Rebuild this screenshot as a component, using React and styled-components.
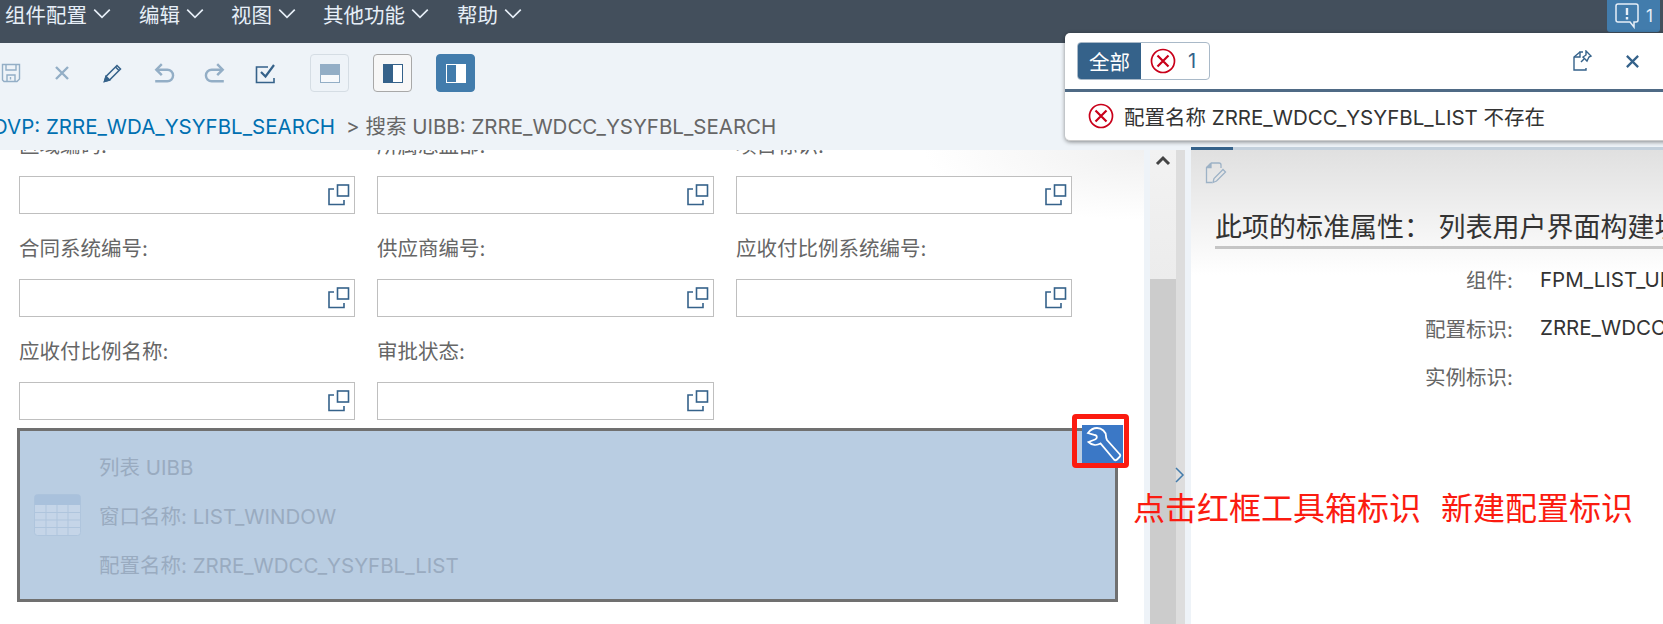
import React from 'react';
import styled, { createGlobalStyle } from 'styled-components';

const FONT = 'Inter, "Noto Sans CJK SC", sans-serif';
const DARK = '#35628a';
const MUTED = '#93aec6';

const GlobalStyle = createGlobalStyle`
  html, body {
    margin: 0;
    padding: 0;
    height: 624px;
    overflow: hidden;
    background: #fff;
    font-family: ${FONT};
  }
`;

const Page = styled.div`
  position: relative;
  width: 1663px;
  height: 624px;
  overflow: hidden;
  display: flex;
  flex-direction: column;
`;

const TopBar = styled.div`
  height: 43px;
  flex: none;
  background: #434f5c;
  display: flex;
  align-items: flex-start;
  padding-left: 5px;
`;

const MenuItem = styled.div`
  display: flex;
  align-items: center;
  height: 28px;
  gap: 5px;
  margin-right: ${props => props.$gap}px;
  color: #e6eef7;
  font-size: 20.5px;
`;

const NoticeButton = styled.div`
  margin-left: auto;
  margin-right: 3px;
  width: 53px;
  height: 32px;
  background: #427cac;
  border-radius: 0 0 3px 3px;
  display: flex;
  align-items: center;
  justify-content: center;
  gap: 6px;
  color: #e6eef7;
  font-size: 17px;
`;

const Toolbar = styled.div`
  position: relative;
  height: 107px;
  flex: none;
  background: #eef3f8;
  display: flex;
  flex-direction: column;
`;

const ToolRow = styled.div`
  height: 60px;
  margin-left: -15px;
  display: flex;
  align-items: center;
`;

const IconSlot = styled.div`
  width: 51px;
  height: 38px;
  display: flex;
  align-items: center;
  justify-content: center;
  color: ${props => (props.$off ? MUTED : DARK)};
`;

const ViewButton = styled.div`
  width: 39px;
  height: 38px;
  box-sizing: border-box;
  margin-left: ${props => props.$gap}px;
  border-radius: 4px;
  display: flex;
  align-items: center;
  justify-content: center;
  border: 1px solid ${props => (props.$kind === 'on' ? '#427cac' : props.$kind === 'off' ? '#d5dde4' : '#a8a8a8')};
  background: ${props => (props.$kind === 'on' ? '#427cac' : props.$kind === 'off' ? 'transparent' : '#f7f7f7')};
`;

const Crumbs = styled.div`
  margin-left: -8px;
  margin-top: 11px;
  font-size: 20.5px;
  line-height: 26px;
  color: #666;
  white-space: nowrap;
`;

const CrumbLink = styled.span`
  color: #0070b1;
  margin-right: 11px;
`;

const TabLine = styled.div`
  position: absolute;
  left: 1191px;
  right: 0;
  bottom: 0;
  height: 3px;
  background: linear-gradient(to right, ${DARK} 42px, #c3d0dc 42px);
`;

const Body = styled.div`
  flex: 1;
  display: flex;
  min-height: 0;
`;

const FormPane = styled.div`
  width: 1144px;
  flex: none;
  background: radial-gradient(ellipse 220px 70px at top right, #f0f0f0, #ffffff);
`;

const FieldGrid = styled.div`
  display: grid;
  grid-template-columns: 336px 337px 336px;
  column-gap: 22px;
  padding-left: 19px;
`;

const LabelBox = styled.div`
  height: ${props => (props.$cut ? 26 : 65)}px;
  overflow: hidden;
  display: flex;
  flex-direction: column;
  justify-content: flex-end;
`;

const Label = styled.div`
  height: 65px;
  flex: none;
  display: flex;
  align-items: center;
  font-size: 20.5px;
  color: #666;
`;

const InputBox = styled.div`
  height: 38px;
  box-sizing: border-box;
  border: 1px solid #bfbfbf;
  background: #fff;
  display: flex;
  align-items: center;
  justify-content: flex-end;
  padding-right: 4px;
`;

const ListBlock = styled.div`
  position: relative;
  box-sizing: border-box;
  width: 1101px;
  height: 174px;
  margin: 8px 0 0 17px;
  border: 3px solid #707070;
  background: #b9cde2;
  display: flex;
  align-items: center;
  padding-left: 14px;
  gap: 18px;
`;

const BlockLines = styled.div`
  display: flex;
  flex-direction: column;
  gap: 23px;
  margin-top: 4px;
  color: #99abc0;
  font-size: 20.5px;
  line-height: 26px;
`;

const ToolMark = styled.div`
  position: absolute;
  top: -17px;
  right: -14px;
  width: 57px;
  height: 54px;
  box-sizing: border-box;
  border: 5px solid #fb1b10;
  border-radius: 4px;
  display: flex;
  align-items: flex-end;
  justify-content: flex-end;
  padding-right: 1px;
`;

const ToolButton = styled.div`
  width: 41px;
  height: 38px;
  background: #3b78c6;
  line-height: 0;
`;

const Splitter = styled.div`
  position: relative;
  width: 47px;
  flex: none;
  display: flex;
  background: #eef3f8;
  padding: 0 6px;
  box-sizing: border-box;
`;

const ScrollColumn = styled.div`
  width: 26px;
  display: flex;
  flex-direction: column;
`;

const ScrollTrack = styled.div`
  height: 129px;
  background: linear-gradient(to bottom, #f2f2f2, #ececec);
  display: flex;
  justify-content: center;
  padding-top: 2px;
  box-sizing: border-box;
  color: #444;
`;

const ScrollThumb = styled.div`
  flex: 1;
  background: #cccccc;
`;

const Rail = styled.div`
  width: 9px;
  background: #dddddd;
`;

const CollapseArrow = styled.div`
  position: absolute;
  left: 26px;
  top: 316px;
  line-height: 0;
`;

const DetailPane = styled.div`
  flex: 1;
  min-width: 0;
  overflow: hidden;
  background: linear-gradient(to bottom, #e0e0e0 0, #ffffff 125px);
  padding: 12px 0 0 24px;
`;

const DocIconBox = styled.div`
  margin-left: -10px;
  height: 22px;
  line-height: 0;
`;

const DetailTitle = styled.div`
  margin-top: 26px;
  height: 36px;
  line-height: 36px;
  border-bottom: 3px solid #c5c5c5;
  font-size: 27px;
  color: #333;
  white-space: nowrap;
`;

const PropRows = styled.div`
  display: grid;
  grid-template-columns: 298px 1fr;
  column-gap: 27px;
  margin-top: 6px;
  grid-auto-rows: 48.5px;
  align-items: center;
  font-size: 20.5px;
  white-space: nowrap;
`;

const PropName = styled.div`
  text-align: right;
  color: #666;
`;

const PropValue = styled.div`
  color: #333;
`;

const Annotation = styled.div`
  position: absolute;
  left: 1133px;
  top: 489px;
  color: #fb1b10;
  font-size: 32px;
  line-height: 40px;
  word-spacing: 1px;
  white-space: pre;
`;

const Popover = styled.div`
  position: absolute;
  left: 1065px;
  top: 33px;
  width: 610px;
  height: 108px;
  box-sizing: border-box;
  background: #fff;
  border-radius: 5px;
  border-bottom: 1px solid #ccc;
  box-shadow: 0 1px 4px rgba(0, 0, 0, 0.45);
`;

const PopHead = styled.div`
  height: 59px;
  box-sizing: border-box;
  border-bottom: 3px solid #4f6a85;
  display: flex;
  align-items: center;
  padding: 0 0 0 12px;
`;

const Segments = styled.div`
  display: flex;
  height: 38px;
  box-sizing: border-box;
  border: 1px solid #a9b9c8;
  border-radius: 4px;
  overflow: hidden;
`;

const SegmentAll = styled.div`
  width: 63px;
  background: ${DARK};
  color: #fff;
  font-size: 20.5px;
  display: flex;
  align-items: center;
  justify-content: center;
`;

const SegmentError = styled.div`
  width: 68px;
  display: flex;
  align-items: center;
  gap: 12px;
  padding-left: 9px;
  box-sizing: border-box;
  color: ${DARK};
  font-size: 20px;
`;

const PopAction = styled.div`
  margin-left: ${props => props.$gap}px;
  color: ${DARK};
  line-height: 0;
`;

const PopMessage = styled.div`
  height: 48px;
  display: flex;
  align-items: center;
  padding-left: 23px;
  gap: 10px;
  font-size: 20.5px;
  color: #333;
`;

const Chevron = ({ dir = 'down', size = 20, color = 'currentColor', width = 1.5 }) => {
  const pts = {
    down: '2,5 9,12 16,5',
    up: '3,12 9,6 15,12',
    right: '6,2 13,9 6,16',
  };
  return (
    <svg width={size} height={size} viewBox="0 0 18 18" fill="none" stroke={color} strokeWidth={width}>
      <polyline points={pts[dir]} />
    </svg>
  );
};

const SaveIcon = () => (
  <svg width="20" height="20" viewBox="0 0 20 20" fill="none" stroke="currentColor" strokeWidth="1.4">
    <path d="M1.5 1.5h17v14.5l-2.5 2.5h-13l-1.5-1.5z" />
    <path d="M5 1.5v5.5h10v-5.5" />
    <path d="M6 18.500v-6.500h8v6.500" />
    <path d="M9.500 14v2.500" />
  </svg>
);

const CloseIcon = ({ size = 16, width = 2.4 }) => (
  <svg width={size} height={size} viewBox="0 0 16 16" fill="none" stroke="currentColor" strokeWidth={width}>
    <path d="M2 2l12 12M14 2L2 14" />
  </svg>
);

const PencilIcon = () => (
  <svg width="20" height="20" viewBox="0 0 20 20" fill="none" stroke="currentColor" strokeWidth="1.5">
    <path d="M1.500 18.500l1.500-5 11-11 3.500 3.500-11 11z" />
    <path d="M12.500 4l3.500 3.500" />
    <path d="M1.500 18.500l1.500-5 3.500 3.500z" fill="currentColor" />
  </svg>
);

const UndoIcon = ({ flip }) => (
  <svg
    width="22"
    height="22"
    viewBox="0 0 20 20"
    fill="none"
    stroke="currentColor"
    strokeWidth="2.2"
    transform={flip ? 'scale(-1 1)' : undefined}
  >
    <path d="M8 2L3 7l5 5" />
    <path d="M3 7h10a5 5 0 0 1 0 10.500H2" />
  </svg>
);

const CheckIcon = () => (
  <svg width="21" height="21" viewBox="0 0 21 21" fill="none" stroke="currentColor" strokeWidth="1.6">
    <path d="M13 4H1.500v15.500h17.500V15" />
    <path d="M6 9l4.500 4.500L19 2" strokeWidth="2.200" />
  </svg>
);

const PaneIcon = ({ mode, fill, line }) => {
  const shade = {
    top: <rect x="1" y="1" width="18" height="10" fill={fill} />,
    left: <rect x="1" y="1" width="9" height="17" fill={fill} />,
  }[mode];
  return (
    <svg width="20" height="19" viewBox="0 0 20 19">
      <rect x="0.5" y="0.5" width="19" height="18" fill="#fff" fillOpacity={mode === 'top' ? 0.5 : 1} stroke={line} />
      {shade}
    </svg>
  );
};

const NoticeIcon = () => (
  <svg width="26" height="28" viewBox="0 0 26 28" fill="none" stroke="currentColor" strokeWidth="1.5">
    <path d="M4 2h18a2 2 0 0 1 2 2v14a2 2 0 0 1-2 2h-2v5l-4-5H4a2 2 0 0 1-2-2V4a2 2 0 0 1 2-2z" />
    <path d="M13 6v7M13 15v2.500" strokeWidth="2.400" />
  </svg>
);

const ValueHelpIcon = () => (
  <svg width="22" height="22" viewBox="0 0 22 22" fill="none" stroke={DARK} strokeWidth="1.6">
    <path d="M6 5H1v15.500h15V16" />
    <rect x="9.500" y="1" width="11" height="11" />
  </svg>
);

const ErrorIcon = () => (
  <svg width="26" height="26" viewBox="0 0 26 26" fill="none" stroke="#c9001a">
    <circle cx="13" cy="13" r="11.500" strokeWidth="1.700" />
    <path d="M7.500 7.500l11 11M18.500 7.500l-11 11" strokeWidth="2.200" />
  </svg>
);

const PinDocIcon = () => (
  <svg width="22" height="22" viewBox="0 0 22 22" fill="none" stroke="currentColor" strokeWidth="1.4">
    <path d="M8 2L2 7v13h12v-2" />
    <path d="M2 7h6V2h3" />
    <path d="M14 1l5 5-2 1-2 4-4-4 3-2z" />
    <path d="M12 9l-3 3" />
  </svg>
);

const EditDocIcon = () => (
  <svg width="22" height="22" viewBox="0 0 22 22" fill="none" stroke="#9db2c6" strokeWidth="1.3">
    <path d="M6 1L1.500 5.500V20.500H7" />
    <path d="M6 1h8a2 2 0 0 1 2 2v3" />
    <path d="M1.500 5.500H6V1" fill="#9db2c6" />
    <path d="M8 20.500l1-4L18 7.500l2.500 2.500-9 9z" />
  </svg>
);

const WrenchIcon = () => (
  <svg width="41" height="38" viewBox="0 0 41 38" fill="none" stroke="#fff" strokeWidth="1.8">
    <path d="M6 8C9 4 12 3 15 3c5 0 9 4 9 8 0 1.500.5 3 1 4l12.500 14c1 1 1 2 0 3L35 34.500c-1 1-2 1-3 0L18.500 18.500c-3.500 2-8.500 2-12-1.500l6.500-2.500c2.500-1 2.500-4 0-4.500z" />
  </svg>
);

const TableIcon = () => (
  <svg width="47" height="42" viewBox="0 0 47 42">
    <rect x="0.5" y="0.5" width="46" height="41" rx="3" fill="#c5d5e8" stroke="#afc5dd" />
    <path d="M0.500 11V3.500a3 3 0 0 1 3-3h40a3 3 0 0 1 3 3V11z" fill="#a9c1dc" />
    <path
      d="M12 11v30M23 11v30M34 11v30M1 18.500h45M1 26h45M1 33.500h45"
      stroke="#afc5dd"
      strokeWidth="1"
      fill="none"
    />
  </svg>
);

const menus = [
  { label: '组件配置', gap: 27 },
  { label: '编辑', gap: 26 },
  { label: '视图', gap: 26 },
  { label: '其他功能', gap: 27 },
  { label: '帮助', gap: 0 },
];

const fields = [
  { label: '区域编码:', cut: true },
  { label: '所属总监部:', cut: true },
  { label: '项目标识:', cut: true },
  { label: '合同系统编号:' },
  { label: '供应商编号:' },
  { label: '应收付比例系统编号:' },
  { label: '应收付比例名称:' },
  { label: '审批状态:' },
];

const Field = ({ label, cut }) => (
  <div>
    <LabelBox $cut={cut}>
      <Label>{label}</Label>
    </LabelBox>
    <InputBox>
      <ValueHelpIcon />
    </InputBox>
  </div>
);

export default function App() {
  return (
    <Page>
      <GlobalStyle />
      <TopBar>
        {menus.map(menu => (
          <MenuItem key={menu.label} $gap={menu.gap}>
            {menu.label}
            <Chevron />
          </MenuItem>
        ))}
        <NoticeButton>
          <NoticeIcon />1
        </NoticeButton>
      </TopBar>

      <Toolbar>
        <ToolRow>
          <IconSlot $off><SaveIcon /></IconSlot>
          <IconSlot $off><CloseIcon /></IconSlot>
          <IconSlot><PencilIcon /></IconSlot>
          <IconSlot $off><UndoIcon /></IconSlot>
          <IconSlot $off><UndoIcon flip /></IconSlot>
          <IconSlot><CheckIcon /></IconSlot>
          <ViewButton $kind="off" $gap={19}>
            <PaneIcon mode="top" fill={MUTED} line={MUTED} />
          </ViewButton>
          <ViewButton $gap={24}>
            <PaneIcon mode="left" fill={DARK} line={DARK} />
          </ViewButton>
          <ViewButton $kind="on" $gap={24}>
            <PaneIcon mode="left" fill="#427cac" line="#fff" />
          </ViewButton>
        </ToolRow>
        <Crumbs>
          <CrumbLink>OVP: ZRRE_WDA_YSYFBL_SEARCH</CrumbLink>
          &gt; 搜索 UIBB: ZRRE_WDCC_YSYFBL_SEARCH
        </Crumbs>
        <TabLine />
      </Toolbar>

      <Body>
        <FormPane>
          <FieldGrid>
            {fields.map(field => (
              <Field key={field.label} label={field.label} cut={field.cut} />
            ))}
          </FieldGrid>
          <ListBlock>
            <TableIcon />
            <BlockLines>
              <div>列表 UIBB</div>
              <div>窗口名称: LIST_WINDOW</div>
              <div>配置名称: ZRRE_WDCC_YSYFBL_LIST</div>
            </BlockLines>
            <ToolMark>
              <ToolButton>
                <WrenchIcon />
              </ToolButton>
            </ToolMark>
          </ListBlock>
        </FormPane>

        <Splitter>
          <ScrollColumn>
            <ScrollTrack>
              <Chevron dir="up" size={18} width={3} />
            </ScrollTrack>
            <ScrollThumb />
          </ScrollColumn>
          <Rail />
          <CollapseArrow>
            <Chevron dir="right" size={18} color="#427cac" width={1.5} />
          </CollapseArrow>
        </Splitter>

        <DetailPane>
          <DocIconBox>
            <EditDocIcon />
          </DocIconBox>
          <DetailTitle>此项的标准属性： 列表用户界面构建块</DetailTitle>
          <PropRows>
            <PropName>组件:</PropName>
            <PropValue>FPM_LIST_UIBB</PropValue>
            <PropName>配置标识:</PropName>
            <PropValue>ZRRE_WDCC_YSYFBL_LIST</PropValue>
            <PropName>实例标识:</PropName>
            <PropValue />
          </PropRows>
        </DetailPane>
      </Body>

      <Annotation>点击红框工具箱标识  新建配置标识</Annotation>

      <Popover>
        <PopHead>
          <Segments>
            <SegmentAll>全部</SegmentAll>
            <SegmentError>
              <ErrorIcon />1
            </SegmentError>
          </Segments>
          <PopAction $gap={362}><PinDocIcon /></PopAction>
          <PopAction $gap={31}><CloseIcon size={15} /></PopAction>
        </PopHead>
        <PopMessage>
          <ErrorIcon />
          配置名称 ZRRE_WDCC_YSYFBL_LIST 不存在
        </PopMessage>
      </Popover>
    </Page>
  );
}
